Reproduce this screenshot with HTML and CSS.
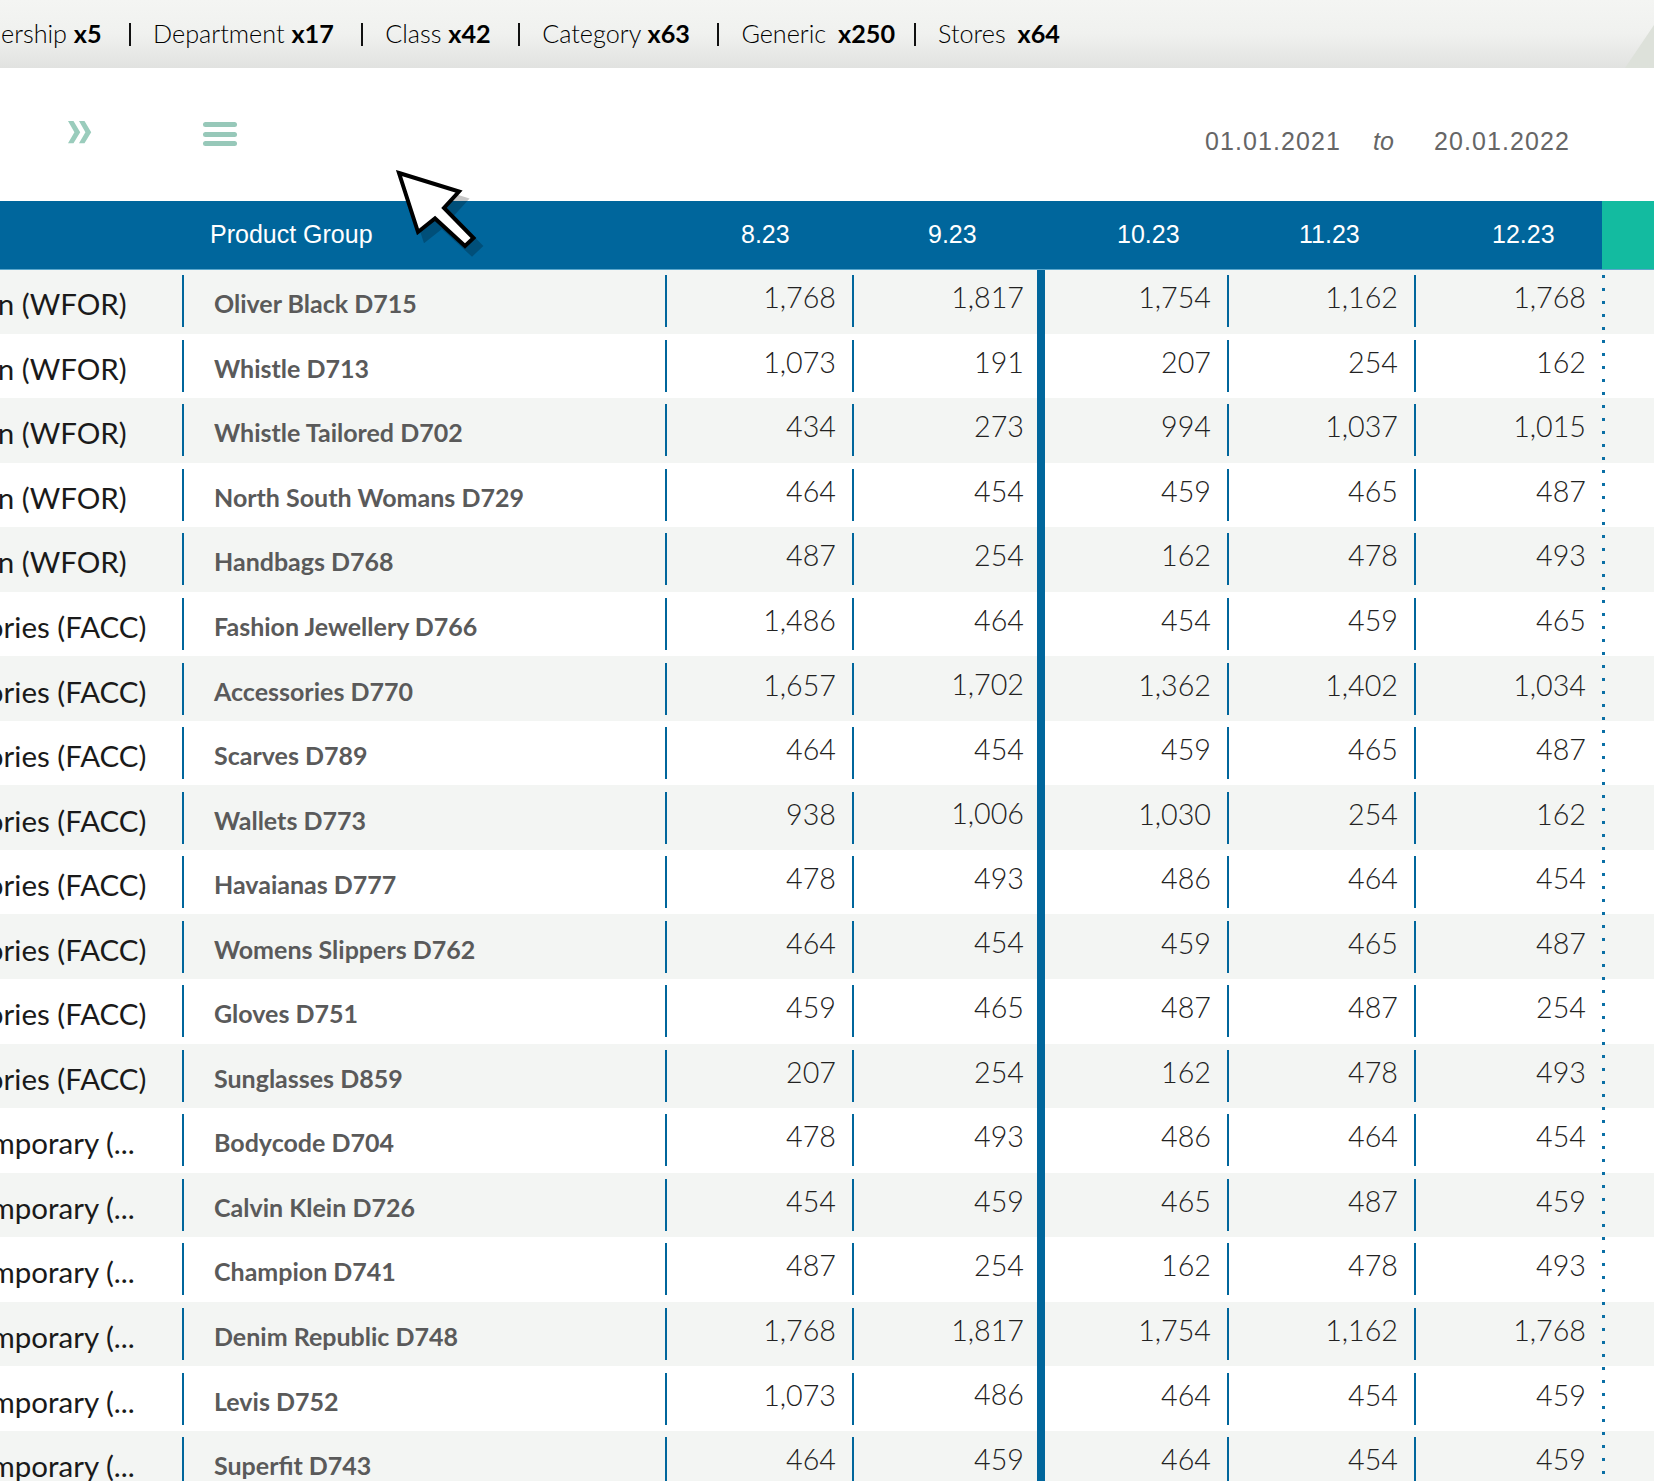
FILE: index.html
```html
<!DOCTYPE html>
<html lang="en">
<head>
<meta charset="utf-8">
<title>Product Group</title>
<link rel="stylesheet" href="styles.css">
</head>
<body>
<div class="topbar">
  <div class="crumbs">
    <span class="crumb c1">Ownership <b>x5</b></span><i class="bar"></i>
    <span class="crumb c2">Department <b>x17</b></span><i class="bar"></i>
    <span class="crumb c3">Class <b>x42</b></span><i class="bar"></i>
    <span class="crumb c4">Category <b>x63</b></span><i class="bar"></i>
    <span class="crumb c5">Generic <b class="wide">x250</b></span><i class="bar short"></i>
    <span class="crumb c6">Stores <b class="wide">x64</b></span>
  </div>
  <svg class="corner" width="29" height="43" viewBox="0 0 29 43"><polygon points="0,43 29,0 29,43" fill="#dde1da"/></svg>
</div>
<div class="toolbar">
  <svg class="chev" width="24" height="24" viewBox="0 0 24 24"><path d="M0 0h5.5l6.7 11.3L5.5 22.3H0l6.4-11z M11 0h5.5l6.7 11.3L16.5 22.3H11l6.4-11z" fill="#9accbc"/></svg>
  <div class="burger"><i></i><i></i><i></i></div>
  <div class="dates"><span>01.01.2021</span><em>to</em><span>20.01.2022</span></div>
</div>
<div class="thead">
  <span class="th-name">Product Group</span>
  <span class="th t1">8.23</span>
  <span class="th t2">9.23</span>
  <span class="th t3">10.23</span>
  <span class="th t4">11.23</span>
  <span class="th t5">12.23</span>
  <span class="th-end"></span>
</div>
<div class="tbody">
<div class="row"><span class="cat wfor">Fashion (WFOR)</span><span class="name">Oliver Black D715</span><span class="num">1,768</span><span class="num thick">1,817</span><span class="num">1,754</span><span class="num">1,162</span><span class="num last">1,768</span></div>
<div class="row"><span class="cat wfor">Fashion (WFOR)</span><span class="name">Whistle D713</span><span class="num">1,073</span><span class="num thick">191</span><span class="num">207</span><span class="num">254</span><span class="num last">162</span></div>
<div class="row"><span class="cat wfor">Fashion (WFOR)</span><span class="name">Whistle Tailored D702</span><span class="num">434</span><span class="num thick">273</span><span class="num">994</span><span class="num">1,037</span><span class="num last">1,015</span></div>
<div class="row"><span class="cat wfor">Fashion (WFOR)</span><span class="name">North South Womans D729</span><span class="num">464</span><span class="num thick">454</span><span class="num">459</span><span class="num">465</span><span class="num last">487</span></div>
<div class="row"><span class="cat wfor">Fashion (WFOR)</span><span class="name">Handbags D768</span><span class="num">487</span><span class="num thick">254</span><span class="num">162</span><span class="num">478</span><span class="num last">493</span></div>
<div class="row"><span class="cat facc">Accessories (FACC)</span><span class="name">Fashion Jewellery D766</span><span class="num">1,486</span><span class="num thick">464</span><span class="num">454</span><span class="num">459</span><span class="num last">465</span></div>
<div class="row"><span class="cat facc">Accessories (FACC)</span><span class="name">Accessories D770</span><span class="num">1,657</span><span class="num thick">1,702</span><span class="num">1,362</span><span class="num">1,402</span><span class="num last">1,034</span></div>
<div class="row"><span class="cat facc">Accessories (FACC)</span><span class="name">Scarves D789</span><span class="num">464</span><span class="num thick">454</span><span class="num">459</span><span class="num">465</span><span class="num last">487</span></div>
<div class="row"><span class="cat facc">Accessories (FACC)</span><span class="name">Wallets D773</span><span class="num">938</span><span class="num thick">1,006</span><span class="num">1,030</span><span class="num">254</span><span class="num last">162</span></div>
<div class="row"><span class="cat facc">Accessories (FACC)</span><span class="name">Havaianas D777</span><span class="num">478</span><span class="num thick">493</span><span class="num">486</span><span class="num">464</span><span class="num last">454</span></div>
<div class="row"><span class="cat facc">Accessories (FACC)</span><span class="name">Womens Slippers D762</span><span class="num">464</span><span class="num thick">454</span><span class="num">459</span><span class="num">465</span><span class="num last">487</span></div>
<div class="row"><span class="cat facc">Accessories (FACC)</span><span class="name">Gloves D751</span><span class="num">459</span><span class="num thick">465</span><span class="num">487</span><span class="num">487</span><span class="num last">254</span></div>
<div class="row"><span class="cat facc">Accessories (FACC)</span><span class="name">Sunglasses D859</span><span class="num">207</span><span class="num thick">254</span><span class="num">162</span><span class="num">478</span><span class="num last">493</span></div>
<div class="row"><span class="cat cont">Contemporary (...</span><span class="name">Bodycode D704</span><span class="num">478</span><span class="num thick">493</span><span class="num">486</span><span class="num">464</span><span class="num last">454</span></div>
<div class="row"><span class="cat cont">Contemporary (...</span><span class="name">Calvin Klein D726</span><span class="num">454</span><span class="num thick">459</span><span class="num">465</span><span class="num">487</span><span class="num last">459</span></div>
<div class="row"><span class="cat cont">Contemporary (...</span><span class="name">Champion D741</span><span class="num">487</span><span class="num thick">254</span><span class="num">162</span><span class="num">478</span><span class="num last">493</span></div>
<div class="row"><span class="cat cont">Contemporary (...</span><span class="name">Denim Republic D748</span><span class="num">1,768</span><span class="num thick">1,817</span><span class="num">1,754</span><span class="num">1,162</span><span class="num last">1,768</span></div>
<div class="row"><span class="cat cont">Contemporary (...</span><span class="name">Levis D752</span><span class="num">1,073</span><span class="num thick">486</span><span class="num">464</span><span class="num">454</span><span class="num last">459</span></div>
<div class="row"><span class="cat cont">Contemporary (...</span><span class="name">Superfit D743</span><span class="num">464</span><span class="num thick">459</span><span class="num">464</span><span class="num">454</span><span class="num last">459</span></div>
</div>
<svg class="cursor" width="100" height="100" viewBox="0 0 100 100">
  <polygon points="12,6 72,24.5 57,41 86.5,71 78,79 48,51.5 31,65" fill="#000" opacity="0.22" stroke="#000" stroke-width="4" transform="translate(7,8)"/>
  <polygon points="12,6 72,24.5 57,41 86.5,71 78,79 48,51.5 31,65" fill="#fff" stroke="#000" stroke-width="4" stroke-linejoin="miter"/>
</svg>
</body>
</html>
```
FILE: styles.css
```css
html, body { margin: 0; padding: 0; height: 1481px; overflow: hidden; background: #fff; }
body { font-family: Lato, "Liberation Sans", sans-serif; position: relative; color: #000; }

.topbar { position: relative; height: 68px; background: linear-gradient(#f4f5f3 0%, #f0f1ef 50%, #e1e2e0 100%); overflow: hidden; }
.crumbs { display: flex; align-items: center; height: 66px; font-size: 25.2px; font-weight: 300; white-space: nowrap; margin-left: -52px; color: #000; }
.crumb b { font-weight: 700; }
.crumb b.wide { margin-left: 5px; }
.bar { display: block; width: 2px; height: 23px; background: #111; margin: 2px 22px 0 27.5px; }
.bar.short { margin-left: 19px; }
.corner { position: absolute; right: 0; bottom: 0; }

.toolbar { position: relative; height: 133px; display: flex; align-items: flex-start; }
.chev { margin: 53px 0 0 68px; }
.burger { margin: 54px 0 0 111px; width: 34px; display: flex; flex-direction: column; gap: 4.5px; }
.burger i { display: block; height: 5px; border-radius: 2.5px; background: #97c8b9; }
.dates { margin: 59px 0 0 auto; padding-right: 84px; display: flex; gap: 32px; font-family: "Liberation Sans", sans-serif; font-size: 25px; letter-spacing: 1.1px; color: #666; line-height: 28px; }
.dates em { font-style: italic; letter-spacing: 0; margin: 0 8px 0 0; }

.thead { position: relative; z-index: 1; display: grid; grid-template-columns: 210px 531px 187px 189px 182px 193px 110px 52px; height: 68px; margin-bottom: -1px; background: #00669c; border-bottom: 1px solid #5aa7cc; color: #fff; font-family: "Liberation Sans", sans-serif; font-size: 25px; line-height: 66px; }
.th-name { grid-column: 2; }
.th-end { background: #13bba0; }

.tbody { position: relative; }
.tbody::after { content: ""; position: absolute; left: 1601.5px; top: 0; bottom: 0; width: 3px; background: radial-gradient(circle at 50% 50%, #0a6fa5 1.6px, transparent 2px) 0 1px / 3px 13px repeat-y; }
.row { display: grid; grid-template-columns: 182px 485px 187px 191px 184px 187px 186px 52px; height: 64.55px; align-items: center; }
.row:nth-child(odd) { background: #f3f5f3; }
.cat { height: 52px; overflow: hidden; font-size: 29.5px; line-height: 58px; color: #1a1a1a; white-space: nowrap; }
.wfor { text-indent: -84.5px; }
.facc { text-indent: -101.5px; }
.cont { text-indent: -88px; }
.name { height: 52px; border-left: 2px solid #00669c; border-right: 2px solid #00669c; box-sizing: border-box; padding-left: 30px; font-size: 25px; font-weight: 700; line-height: 56px; color: #5a5a5a; white-space: nowrap; }
.num { height: 52px; box-sizing: border-box; border-right: 2px solid #00669c; padding-right: 16px; text-align: right; font-size: 28.7px; font-weight: 300; line-height: 45px; color: #222; }
.num.thick { height: 100%; border-right: 8px solid #00669c; padding-right: 13px; line-height: 57px; }
.num.last { border-right: 0; padding-right: 16px; }

.cursor { position: absolute; z-index: 2; left: 387px; top: 167px; overflow: visible; }
```
